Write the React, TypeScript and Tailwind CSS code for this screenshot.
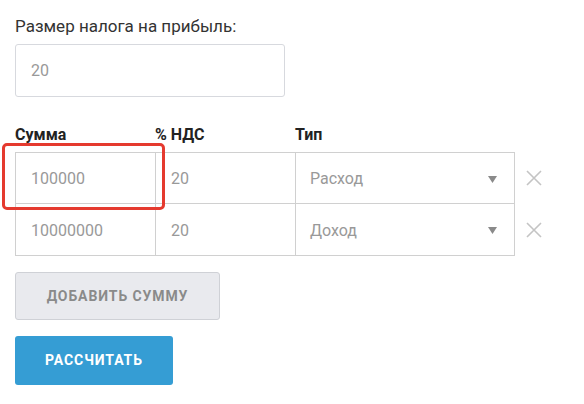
import React from "react";

type Row = { amount: string; vat: string; type: string };

const rows: Row[] = [
  { amount: "100000", vat: "20", type: "Расход" },
  { amount: "10000000", vat: "20", type: "Доход" },
];

function CloseIcon() {
  return (
    <svg width="16" height="16" viewBox="0 0 16 16" fill="none">
      <path d="M1 1L15 15M15 1L1 15" stroke="#c4c4c4" strokeWidth="1.6" />
    </svg>
  );
}

function Caret() {
  return (
    <svg width="9" height="7" viewBox="0 0 9 7">
      <path d="M0 0H9L4.5 7Z" fill="#8a8a8a" />
    </svg>
  );
}

export default function App() {
  return (
    <div
      className="relative w-[584px] h-[404px] bg-white px-[15px] pt-[16px] text-[#333]"
      style={{ fontFamily: "Roboto, 'Liberation Sans', sans-serif" }}
    >
      <label className="block text-[17px] leading-[20px] text-[#333]">
        Размер налога на прибыль:
      </label>
      <div className="mt-[8px] w-[270px] h-[53px] border border-[#d7d9de] rounded-[3px] flex items-center px-[15px] text-[16px] text-[#999]">
        20
      </div>

      <div className="mt-[28px] flex text-[16px] font-bold text-[#222] leading-[20px]">
        <div className="w-[140px]">Сумма</div>
        <div className="w-[140px]">% НДС</div>
        <div>Тип</div>
      </div>

      <div className="mt-[7px] flex flex-col">
        {rows.map((row, i) => (
          <div key={i} className="flex items-center">
            <div
              className={
                "flex w-[500px] h-[52px] border-x border-[#d0d0d0] border-b " +
                (i === 0 ? "border-t" : "")
              }
            >
              <div className="w-[140px] border-r border-[#d0d0d0] flex items-center pl-[15px] pt-[2px] text-[16px] text-[#999]">
                {row.amount}
              </div>
              <div className="w-[140px] border-r border-[#d0d0d0] flex items-center pl-[15px] pt-[2px] text-[16px] text-[#999]">
                {row.vat}
              </div>
              <div className="flex-1 flex items-center justify-between pl-[14px] pr-[17px] pt-[2px] text-[16px] text-[#999]">
                <span>{row.type}</span>
                <Caret />
              </div>
            </div>
            <div className="ml-[11px] flex items-center">
              <CloseIcon />
            </div>
          </div>
        ))}
      </div>

      <button className="mt-[16px] block w-[205px] h-[48px] bg-[#e9eaee] border border-[#cfd1d6] rounded-[3px] text-[14px] font-bold tracking-[0.9px] text-[#8a8a8a] uppercase">
        Добавить сумму
      </button>
      <button className="mt-[16px] block w-[158px] h-[49px] bg-[#359dd4] rounded-[3px] text-[14px] font-bold tracking-[0.9px] text-white uppercase">
        Рассчитать
      </button>

      <div className="absolute left-[2px] top-[143px] w-[163px] h-[67px] border-[3px] border-[#e53a2f] rounded-[5px] pointer-events-none" />
    </div>
  );
}
